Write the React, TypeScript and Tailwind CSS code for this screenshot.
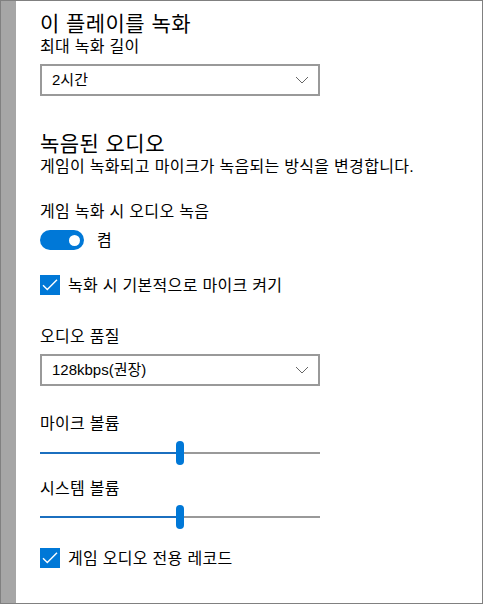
const font = { fontFamily: '"Liberation Sans", "Noto Sans CJK KR", sans-serif' };

// Latin metrics come from Liberation Sans, Hangul falls back to Noto Sans CJK KR
const label = "pt-[2px] text-[16px] leading-[18px] tracking-[0.3px] text-black";
const heading = "pt-[3px] text-[21px] font-normal leading-[25px] tracking-[0.45px] text-black";

function Dropdown({ value }: { value: string }) {
  return (
    <div className="flex h-[32px] w-[280px] items-center justify-between border-2 border-[#999999] bg-white pl-[10px] pr-[9px]">
      <span className="text-[15px] leading-[20px] text-black">{value}</span>
      <svg width="14" height="8" viewBox="0 0 14 8" fill="none">
        <path d="M1 1l6 6 6-6" stroke="#666666" strokeWidth="1" />
      </svg>
    </div>
  );
}

function CheckRow({ text, className }: { text: string; className: string }) {
  return (
    <div className={`flex items-center gap-[8px] ${className}`}>
      <div className="flex h-[20px] w-[20px] items-center justify-center bg-[#0078d7]">
        <svg width="16" height="12" viewBox="0 0 16 12" fill="none">
          <path d="M1 6.2l4.3 4.3L15 0.8" stroke="white" strokeWidth="1.4" />
        </svg>
      </div>
      <span className={label}>{text}</span>
    </div>
  );
}

function Slider({ value, className }: { value: number; className: string }) {
  return (
    <div className={`relative h-[24px] w-[280px] ${className}`}>
      <div className="absolute left-0 right-0 top-[11px] h-[2px] bg-[#999999]" />
      <div
        className="absolute left-0 top-[11px] h-[2px] bg-[#1b6fbf]"
        style={{ width: `${value}%` }}
      />
      <div
        className="absolute top-0 h-[24px] w-[8px] -translate-x-1/2 rounded-full bg-[#0078d7]"
        style={{ left: `${value}%` }}
      />
    </div>
  );
}

export default function App() {
  return (
    <div
      className="flex h-[604px] w-[483px] overflow-hidden border border-[#808080] bg-white text-black"
      style={font}
    >
      <div className="w-[15px] shrink-0 bg-[#a6a6a6]" />
      <div className="flex flex-1 flex-col pl-[24px] pt-[7px]">
        <h1 className={heading}>이 플레이를 녹화</h1>
        <p className={label}>최대 녹화 길이</p>
        <div className="mt-[8px]">
          <Dropdown value="2시간" />
        </div>

        <h2 className={`mt-[32px] ${heading}`}>녹음된 오디오</h2>
        <p className={label}>게임이 녹화되고 마이크가 녹음되는 방식을 변경합니다.</p>

        <p className={`mt-[25px] ${label}`}>게임 녹화 시 오디오 녹음</p>
        <div className="mt-[9px] flex items-center gap-[13px]">
          <div className="flex h-[20px] w-[44px] items-center justify-end rounded-full bg-[#0078d7] pr-[4px]">
            <div className="h-[11px] w-[11px] rounded-full bg-white" />
          </div>
          <span className={label}>켬</span>
        </div>

        <CheckRow text="녹화 시 기본적으로 마이크 켜기" className="mt-[25px]" />

        <p className={`mt-[31px] ${label}`}>오디오 품질</p>
        <div className="mt-[8px]">
          <Dropdown value="128kbps(권장)" />
        </div>

        <p className={`mt-[27px] ${label}`}>마이크 볼륨</p>
        <Slider value={50} className="mt-[8px]" />

        <p className={`mt-[13px] ${label}`}>시스템 볼륨</p>
        <Slider value={50} className="mt-[7px]" />

        <CheckRow text="게임 오디오 전용 레코드" className="mt-[19px]" />
      </div>
    </div>
  );
}
